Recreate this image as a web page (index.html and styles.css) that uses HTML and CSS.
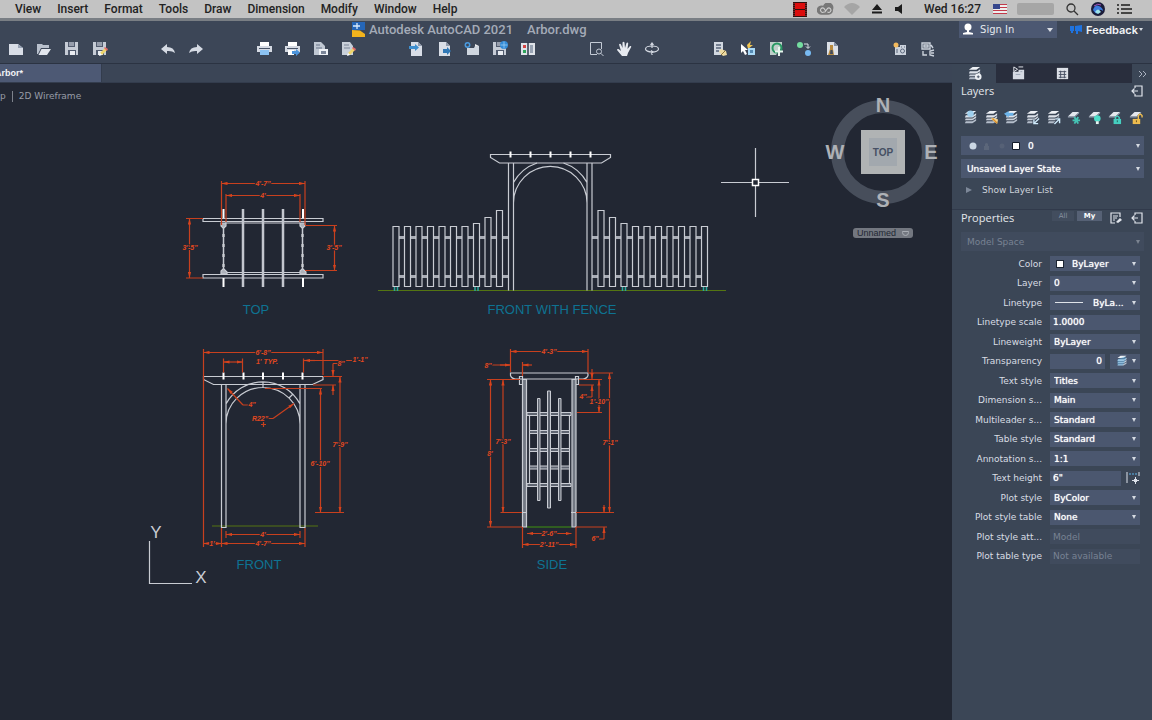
FILE: index.html
```html
<!DOCTYPE html>
<html lang="en">
<head>
<meta charset="utf-8">
<title>Autodesk AutoCAD 2021 - Arbor.dwg</title>
<link rel="stylesheet" href="styles.css">
</head>
<body>
<svg class="defs" aria-hidden="true">
  <defs>
    <marker id="arr" viewBox="0 0 6 4" refX="6" refY="2" markerWidth="6" markerHeight="4" markerUnits="userSpaceOnUse" orient="auto-start-reverse"><path d="M0 0.4L6 2L0 3.6z" fill="#d8431c"/></marker>
    <symbol id="stack" viewBox="0 0 16 16"><path d="M6 1h8l-4 3H2z" fill="#eef1f5"/><path d="M3 5.500h8l3-2v2l-4 2.500H2z" fill="#dde2ea"/><path d="M3 9h7l4-2.500v2L10 11H2z" fill="#c9d0da"/><path d="M3 12h7l4-2.500v2L10 14H2z" fill="#b4bdca"/></symbol>
    <symbol id="sheet" viewBox="0 0 16 16"><path d="M7 2h7l-5 5H2z" fill="#e4e8ee"/><path d="M2 7h7l5-5v1.500L9 8H2z" fill="#9aa5b5"/></symbol>
    <symbol id="page" viewBox="0 0 16 16"><path d="M3 1h7l4 4v10H3z" fill="#d9dee7"/><path d="M10 1v4h4z" fill="#8f9aac"/></symbol>
    <symbol id="floppy" viewBox="0 0 16 16"><path d="M1 1h13v13H1z" fill="#c6ccd6"/><path d="M4 1h7v5H4z" fill="#515b6e"/><path d="M5 2h5M5 4h5" stroke="#dde2ea"/><path d="M4 9h8v5H4z" fill="#515b6e"/><path d="M6 10h5v4H6z" fill="#e9ecf1"/></symbol>
    <symbol id="pencil" viewBox="0 0 16 16"><path d="M8 12l5-5 2 2-5 5z" fill="#efd56a"/><path d="M12 7l1-1 3 2-1 2z" fill="#e46a6a"/><path d="M7 15l1-3 2 2z" fill="#fff"/></symbol>
    <symbol id="printer" viewBox="0 0 16 16"><path d="M4 1h9v4H4z" fill="#fff"/><path d="M1 5h15v6H1z" fill="#d5dae3"/><path d="M3 7.500h11" stroke="#4a5569"/></symbol>
    <symbol id="exit" viewBox="0 0 12 12"><path d="M4 3V1h7v10H4V9M1 6h6M3.500 3.500L1 6l2.500 2.500" fill="none" stroke="#e1e5ec" stroke-width="1.200"/></symbol>
  </defs>
</svg>

<nav class="menubar" aria-label="Menu bar">
  <div class="menus">
    <button class="menu">View</button><button class="menu">Insert</button><button class="menu">Format</button><button class="menu">Tools</button><button class="menu">Draw</button><button class="menu">Dimension</button><button class="menu">Modify</button><button class="menu">Window</button><button class="menu">Help</button>
  </div>
  <div class="status">
    <svg width="14" height="15" viewBox="0 0 14 15"><path d="M0 0h14v15H0z" fill="#301010"/><path d="M2 1h10v6H2zM2 8h10v6H2z" fill="#dc0d0d"/><path d="M1 1v14M13 1v14" stroke="#a44" stroke-dasharray="1 1"/></svg>
    <svg width="17" height="13" viewBox="0 0 18 13" fill="none"><path d="M6 12a5 5 0 1 1 .5-9.500A5.500 5.500 0 0 1 17 6.500 5.500 5.500 0 0 1 12 12z" fill="#777"/><path d="M9.500 8.500L7.500 5.500a2.300 2.300 0 1 0 0 3.500M8 9.500l3-4a2.300 2.300 0 1 1 0 3.500" stroke="#cdcdcd" stroke-width="1.200"/></svg>
    <svg width="16" height="12" viewBox="0 0 16 12" fill="#a5a5a5"><path d="M8 12L0 4Q8-4 16 4z"/></svg>
    <svg width="10" height="10" viewBox="0 0 10 10" fill="#1c1c1c"><path d="M5 0l5 6H0zM0 7.500h10V9.500H0z"/></svg>
    <svg width="10" height="10" viewBox="0 0 10 10" fill="#1c1c1c"><path d="M1 3h3l4-3v10L4 7H1z"/></svg>
    <span class="clock">Wed 16:27</span>
    <svg width="14" height="10" viewBox="0 0 14 10"><path d="M0 0h14v10H0z" fill="#eee"/><path d="M0 .5h14M0 3.500h14M0 6.500h14M0 9.500h14" stroke="#c23a4a" stroke-width="1.200"/><path d="M0 0h7v5H0z" fill="#35468c"/></svg>
    <span class="user"></span>
    <svg width="13" height="13" viewBox="0 0 13 13" fill="none" stroke="#333" stroke-width="1.300"><circle cx="5" cy="5" r="4"/><path d="M8 8l4 4"/></svg>
    <svg width="14" height="14" viewBox="0 0 14 14"><circle cx="7" cy="7" r="7" fill="#1b1c3a"/><path d="M2 8q2-6 6-4t4 5q-4-3-5 1T2 8z" fill="#3c7bdc"/><path d="M4 10q3-5 6 0l-3 2z" fill="#9fe3ea"/><path d="M3 4q4-3 7-1" stroke="#a857c4" fill="none"/></svg>
    <svg width="15" height="10" viewBox="0 0 15 10" stroke="#1c1c1c" stroke-width="1.500"><path d="M0 1h2M4 1h9M0 5h2M4 5h11M0 9h2M4 9h11"/></svg>
  </div>
</nav>

<header class="header">
  <div class="titlebar">
    <h1 class="title"><svg width="13" height="15" viewBox="0 0 13 15"><path d="M0 0h13v8H0z" fill="#2566b8"/><path d="M1 4h7M5 1v6" stroke="#d9ecff" stroke-width="1.300"/><path d="M0 8l8 .5 5 3.500v3H0z" fill="#f2b31d"/></svg><span>Autodesk AutoCAD 2021</span><span>Arbor.dwg</span></h1>
    <div class="account">
      <button class="signin"><svg width="12" height="13" viewBox="0 0 12 13" fill="#fff"><circle cx="6" cy="4" r="3.500"/><path d="M5 7h2v2l4 1v1.500H1V10l4-1z"/></svg><span>Sign In</span><i class="caret"></i></button>
      <button class="feedback"><svg width="12" height="11" viewBox="0 0 12 11" fill="#1f73e0"><path d="M0 2h4v5H3v2H1V7H0zM5 2l7-1v7l-4-1v3H6V7H5z"/></svg><span>Feedback</span><i class="caret small"></i></button>
    </div>
  </div>
  <div class="toolbar">
    <div class="group">
      <button class="tool" aria-label="New"><svg viewBox="0 0 16 16"><path d="M1 3h9l5 4v7H1z" fill="#d9dee7"/><path d="M10 3v4h5z" fill="#98a3b5"/></svg></button>
      <button class="tool" aria-label="Open"><svg viewBox="0 0 16 16"><path d="M1 3h5l1 1h6v3H5l-3 6H1z" fill="#b9c1cd"/><path d="M5.500 8H15l-4 6H2.500z" fill="#e3e7ee"/></svg></button>
      <button class="tool" aria-label="Save"><svg viewBox="0 0 16 16"><use href="#floppy"/></svg></button>
      <button class="tool" aria-label="Save As"><svg viewBox="0 0 16 16"><use href="#floppy"/><use href="#pencil"/></svg></button>
    </div>
    <div class="group">
      <button class="tool" aria-label="Undo"><svg viewBox="0 0 16 16"><path d="M1 8l6-5v3q7 0 8 6-3-2.500-8-2v3z" fill="#d5dae3"/></svg></button>
      <button class="tool" aria-label="Redo"><svg viewBox="0 0 16 16"><path d="M15 8L9 3v3q-7 0-8 6 3-2.500 8-2v3z" fill="#d5dae3"/></svg></button>
    </div>
    <div class="group">
      <button class="tool" aria-label="Print"><svg viewBox="0 0 16 16"><use href="#printer"/><path d="M4 9h9v5H4z" fill="#8cc3f3"/></svg></button>
      <button class="tool" aria-label="Batch print"><svg viewBox="0 0 16 16"><use href="#printer"/><path d="M4 9h6v5H4z" fill="#fff"/><path d="M8 10h4V8l4 3.500-4 3.500v-2H8z" fill="#4b94dc"/></svg></button>
      <button class="tool" aria-label="Page setup"><svg viewBox="0 0 16 16"><path d="M2 1h7l4 4v9H2z" fill="#c0c8d3"/><path d="M4 4h4M4 7h6" stroke="#687489"/><path d="M7 8h9v6H7z" fill="#eef1f5"/><path d="M9 10h5v3H9z" fill="#7a8598"/></svg></button>
      <button class="tool" aria-label="Edit sheet"><svg viewBox="0 0 16 16"><path d="M2 1h8l3 4v9H2z" fill="#c9d0da"/><path d="M4 4h5M4 7h6" stroke="#7a8598"/><use href="#pencil"/></svg></button>
    </div>
    <div class="group">
      <button class="tool" aria-label="Import"><svg viewBox="0 0 16 16"><use href="#page"/><path d="M1 5h6V3l4 3.500L7 10V8H1z" fill="#3f8fce"/></svg></button>
      <button class="tool" aria-label="Export"><svg viewBox="0 0 16 16"><use href="#page"/><path d="M7 8h4V6l4 4-4 4v-2H7z" fill="#3178b5"/></svg></button>
      <button class="tool" aria-label="Attach"><svg viewBox="0 0 16 16"><path d="M3 7h7l1-2h4v9H3z" fill="#cfd6df"/><path d="M11 3l4 2h-4z" fill="#eee"/><circle cx="3.500" cy="4" r="2.200" fill="none" stroke="#4a9be0" stroke-width="1.500"/></svg></button>
      <button class="tool" aria-label="Save to web"><svg viewBox="0 0 16 16"><use href="#floppy"/><circle cx="12" cy="4" r="4" fill="#348bd7"/><path d="M8.500 4h7M12 .5v7" stroke="#a6d5f5" stroke-width=".7"/></svg></button>
      <button class="tool" aria-label="Compare"><svg viewBox="0 0 16 16"><path d="M1 2h14v12H1z" fill="#dfe3e9"/><path d="M3 4h3v3H3z" fill="#d34545"/><path d="M3 9h3v3H3z" fill="#2ea45c"/><path d="M8 1v14" stroke="#303a4b" stroke-width="1.500"/><path d="M10 4h3v8h-3z" fill="#98a3b3"/></svg></button>
    </div>
    <div class="group">
      <button class="tool" aria-label="Zoom window"><svg viewBox="0 0 16 16" fill="none" stroke="#c4cbd6"><path d="M9 13.500H2.500v-12h11V8"/><circle cx="11" cy="10.500" r="2.500"/><path d="M12.800 12.300L15.500 15"/></svg></button>
      <button class="tool" aria-label="Pan"><svg viewBox="0 0 16 16"><path d="M6 15L1 9q0-1.500 1.500-1L5 10 3 3.500q1-1.500 2 0L6.500 7 6.500 1.500q1-1.500 2 0L9 7l1.500-5q1.500-1 1.700.5L11.500 8 14 5q1.500-.5 1.200 1L12 12l-1 3z" fill="#e7eaf0"/></svg></button>
      <button class="tool" aria-label="Orbit"><svg viewBox="0 0 16 16" fill="none" stroke="#d5dae3" stroke-width="1.200"><ellipse cx="8" cy="8" rx="6.500" ry="3"/><path d="M8 2v5M8 10v4M6.500 4L8 2l1.500 2M7 9.500l2 1.500-2 1.500"/></svg></button>
    </div>
    <div class="group">
      <button class="tool" aria-label="Properties"><svg viewBox="0 0 16 16"><path d="M2 1h9v13H2z" fill="#d2d8e1"/><path d="M4 4h5M4 7h5M4 10h3" stroke="#58647a" stroke-width="1.500"/><path d="M9 8l5 2 1 4-4 1-4-4z" fill="#eedba2"/><path d="M9 14l4-4" stroke="#8f763b"/></svg></button>
      <button class="tool" aria-label="Quick select"><svg viewBox="0 0 16 16"><path d="M7 4l4-4-1 4h3L8 8z" fill="#f1c550"/><path d="M1 3l7 6H5l2 4-2 1-2-4-2 2z" fill="#fff"/><path d="M8 7h7v7H8z" fill="#a8d8f6"/><path d="M10 9h3v3h-3z" fill="#568bb4"/></svg></button>
      <button class="tool" aria-label="Purge"><svg viewBox="0 0 16 16"><path d="M2 1h12v5l-6 8H2z" fill="#bfcfca"/><circle cx="9" cy="7" r="4.500" fill="none" stroke="#279863" stroke-width="2"/><path d="M11 6v9M7 10.500h8" stroke="#e8f5ee" stroke-width="2"/></svg></button>
      <button class="tool" aria-label="Match"><svg viewBox="0 0 16 16"><circle cx="4" cy="4" r="3" fill="#74dda0"/><circle cx="12" cy="12" r="3" fill="#78baf2"/><path d="M8 3h4v4M10 5.500l2 2 2-2" fill="none" stroke="#dce1e8"/></svg></button>
      <button class="tool" aria-label="Drafting tools"><svg viewBox="0 0 16 16"><path d="M3 1h7l4 4v9H3z" fill="#dce0e7"/><path d="M10 1v4h4z" fill="#8390a4"/><path d="M6 4h3v4l1 6H4l2-6z" fill="#b88a3f"/><path d="M6.500 9h2l.5 4H6z" fill="#414b5b"/></svg></button>
    </div>
    <div class="group">
      <button class="tool" aria-label="Insert block"><svg viewBox="0 0 16 16"><path d="M3 6h5V4h6v10H3z" fill="#cbd2dc"/><circle cx="4" cy="4" r="2.500" fill="#f3b95c"/><path d="M9 6h1M12 6h1M5 8v4" stroke="#5c687c"/><circle cx="10.500" cy="10" r="2" fill="none" stroke="#5c687c"/></svg></button>
      <button class="tool" aria-label="Replace block"><svg viewBox="0 0 16 16" fill="none" stroke="#cbd2dc" stroke-width="1.400"><path d="M2 2h8v6H2zM4 4h4v2H4zM11 4l2 3M3 10v4h4M14 9l-4 1v4l4 1M11 12h3"/></svg></button>
    </div>
  </div>
</header>

<div class="workspace">
  <main class="document">
    <div class="filetabs"><button class="filetab"><span>Arbor*</span></button></div>
    <section class="canvas">
      <div class="viewctl"><button>p</button><i></i><button>2D Wireframe</button></div>
      <svg class="drawing" viewBox="0 83 952 637" preserveAspectRatio="xMinYMin meet" role="img" aria-label="Arbor drawing">
        <!-- Top view -->
        <g class="ln">
          <path d="M203 218.500h120v3H203zM203 274.500h120v3.500H203zM225 223h75M225 272.500h75"/>
          <path class="mid" d="M243 209v78M263 209v78M283 209v78"/>
          <path class="bold" d="M223.500 209v9M303 209v9M223.500 278v9M303 278v9"/>
          <path class="bold" d="M223.500 224v49M302.500 224v49" stroke-dasharray="3 7"/>
          <path d="M223.500 224v49M302.500 224v49" stroke-width="1.500"/>
          <path class="corner" d="M221 223h5v3l-2 2h-1l-2-2zM300 223h5v3l-2 2h-1l-2-2zM221 274v-3l2-2h1l3 3v2zM300 274v-3l2-2h1l3 3v2z"/>
        </g>
        <g class="dim">
          <path d="M221.500 181v44M305 181v44M226 194v28M300 194v28M186 218.500h17M186 278h17M305 225.500h32M305 270.500h32"/>
          <g class="arrows"><path d="M221.500 183.500H305"/><path d="M226 195.500H300"/><path d="M189.500 218.500V278"/><path d="M334.500 225.500V270.500"/></g>
          <text x="263" y="186">4'-7"</text><text x="263" y="198">4'</text><text x="190" y="250">3'-5"</text><text x="334" y="250">3'-5"</text>
        </g>

        <!-- Front with fence -->
        <path class="ground" d="M378 290.500H726"/>
        <g class="ln">
          <path class="rail" d="M399 237.500H508M399 276.500H508M592 237.500H702M592 276.500H702"/>
          <path class="solid" d="M393 286.500V226.500h6v60zM404.500 286.500V226.500h6v60zM416 286.500V226.500h6v60zM427.500 286.500V226.500h6v60zM439 286.500V226.500h6v60zM450.500 286.500V226.500h6v60zM462 286.500V226.500h6v60zM473.500 286.500V223.500h6v63zM485 286.500V217.500h6v69zM496.500 286.500V210.500h6v76z"/>
          <path class="solid" d="M598 286.500V210.500h6v76zM609.500 286.500V217.500h6v69zM621 286.500V223.500h6v63zM632.500 286.500V226.500h6v60zM644 286.500V226.500h6v60zM655.500 286.500V226.500h6v60zM667 286.500V226.500h6v60zM678.500 286.500V226.500h6v60zM690 286.500V226.500h6v60zM701.500 286.500V226.500h6v60z"/>
          <path d="M490.500 154.500H610.500v3L601.500 163H499.500L490.500 157.500z"/>
          <path class="bold" d="M510.500 151.500v6M530.500 151.500v6M550.500 151.500v6M570.500 151.500v6M590.500 151.500v6"/>
          <path d="M508.500 163V290.500M513.500 163V290.500M587 163V290.500M592 163V290.500M513.500 203A36.700 36.500 0 0 1 587 203M513.500 182.500A42 42 0 0 1 537 163M563.500 163A42 42 0 0 1 587 182.500"/>
        </g>
        <path class="foot" d="M394.500 287v4M397.500 287v4M475 287v4M478 287v4M622.500 287v4M625.500 287v4M703.500 287v4M706.500 287v4"/>

        <!-- Front view -->
        <path class="ground" d="M212 526H318"/>
        <g class="ln">
          <path d="M203.500 376.500H323v3L312.500 384.500H213.500L203.500 379.500z"/>
          <path class="bold" d="M223.500 372.500v7M243.500 372.500v7M263 372.500v7M283 372.500v7M302.500 372.500v7"/>
          <path d="M221.500 384.500V527.500H226V384.500M300 384.500V527.500H305V384.500M226 424A37 36.500 0 0 1 300 424M226 404A42 42 0 0 1 300 404M263 382v6M289 398l4-4"/>
        </g>
        <g class="dim">
          <path d="M203.500 349V547M323 349V375M223.500 358.500v14M242.500 358.500v14M303.500 358.500v14M323 376.500H342M313 385H336M265 388.500H322M315 512.500H344M221.500 528V547M305 528V547M226 531v7M300 531v7"/>
          <path d="M303.500 360.500H352M333 363.500h5M243 405h6M273 418.500h-7M261 424.500h5M263.500 422v5"/>
          <g class="arrows"><path d="M203.500 352.500H323"/><path d="M223.500 362H242.500"/><path d="M340 376.500V512.500"/><path d="M320.500 388.500V512.500"/><path d="M226 534.500H300"/><path d="M221.500 543.500H305"/><path d="M203.500 543.500H221.500"/></g>
          <path class="to" d="M333 363.500V376"/><path class="to" d="M333 395V385"/><path class="to" d="M243 405L227.500 388.500"/><path class="to" d="M273 418.500L294 403.500"/><path class="to" d="M315 360.500H304"/>
          <text x="263" y="355">6'-8"</text><text x="267" y="364">1' TYP.</text><text x="360" y="362">1'-1"</text><text x="341" y="366">8"</text><text x="252" y="407">4"</text><text x="260" y="421">R22"</text><text x="340" y="447">7'-9"</text><text x="320" y="466">6'-10"</text><text x="263" y="537">4'</text><text x="263" y="546">4'-7"</text><text x="212" y="546">1'</text>
        </g>

        <!-- Side view -->
        <path class="ground bright" d="M527 527H571"/>
        <g class="ln">
          <path d="M510.500 373H588v2.500q-1 3-5 3.500H515.500q-4-.5-5-3.500zM519.500 376.500h3v8h-3zM575.500 376.500h3v8h-3z"/>
          <path class="postfill" d="M522.500 379.500V527h4V379.500zM572 379.500V527h4V379.500z"/>
          <path d="M522 512.500h5M571 512.500h5M529.500 412.500v74M569.500 412.500v74"/>
          <path class="slat" d="M527 412.500h44v3H527zM529.500 430.500h40v3h-40zM529.500 448.500h40v3h-40zM529.500 466h40v3h-40zM527 483.500h44v3H527z"/>
          <path class="slat" d="M537.500 398.500h2.500v102h-2.500zM547.500 391h3v117h-3zM558.500 398.500h2.500v102h-2.500z"/>
        </g>
        <g class="dim">
          <path d="M510.500 349V372M588 349V372M522.500 362V376M487 379.500H520M487 527H522M500.500 512.500H522M588 373H613M579 379.500H602M579 385H594M577 412.500H602M576 512.500H614M576 527H607M522.500 527V548M576 527V548M492 365H511M604 539h-5M586 397h6"/>
          <g class="arrows"><path d="M510.500 351.500H588"/><path d="M490.500 379.500V527"/><path d="M503 379.500V512.500"/><path d="M609.500 373V512.500"/><path d="M599 379.500V412.500"/><path d="M527 533.500H571.500"/><path d="M522.500 544.500H576"/></g>
          <path class="to" d="M500 365H510.500"/><path class="to" d="M532 365H522.500"/><path class="to" d="M592 369V379"/><path class="to" d="M592 397V385"/><path class="to" d="M604 539V527"/><path class="to" d="M604 505V512.500"/>
          <text x="549" y="354">4'-3"</text><text x="488" y="368">8"</text><text x="490" y="456">8'</text><text x="503" y="444">7'-3"</text><text x="610" y="445">7'-1"</text><text x="599" y="404">1'-10"</text><text x="583" y="399">4"</text><text x="595" y="541">6"</text><text x="549" y="536">2'-6"</text><text x="549" y="547">2'-11"</text>
        </g>

        <g class="caption"><text x="256" y="314">TOP</text><text x="552" y="314">FRONT WITH FENCE</text><text x="259" y="569">FRONT</text><text x="552" y="569">SIDE</text></g>

        <!-- Axes and crosshair -->
        <path class="axis" d="M149.500 541V583.500H192"/>
        <g class="axisname"><text x="156" y="538">Y</text><text x="201" y="583">X</text></g>
        <path class="axis" d="M755.500 148V179.500M755.500 185.500V217M721 182.500H752.500M758.500 182.500H789"/><path class="cross" d="M752.500 179.500h6v6h-6z"/>
      </svg>
      <div class="navcube">
        <svg viewBox="0 0 116 116" width="116" height="116" role="img" aria-label="View cube">
          <circle cx="58" cy="58" r="45.500" fill="none" stroke="#474e5b" stroke-width="13"/>
          <path d="M36 36h44v44H36z" fill="#b0b3b4"/><path d="M44 44h28v28H44z" fill="#a2a8ae"/>
          <text class="face" x="58" y="62">TOP</text>
          <g class="compass"><text x="58" y="18">N</text><text x="10" y="65">W</text><text x="106" y="65">E</text><text x="58" y="113">S</text></g>
        </svg>
        <button class="ucs"><span>Unnamed</span><i></i></button>
      </div>
    </section>
  </main>

  <aside class="panel">
    <div class="paneltabs">
      <button class="ptab active" aria-label="Layers"><svg viewBox="0 0 16 16"><use href="#stack"/><circle cx="12" cy="11.500" r="3.500" fill="#eef1f5"/><path d="M12 10v3M10.500 11.500h3" stroke="#4a5569"/></svg></button>
      <button class="ptab" aria-label="Blocks"><svg viewBox="0 0 16 16"><path d="M2 6h6V4h6v10H2z" fill="#d5dae3"/><path d="M3 1l4 2.500L3 6zM8 1h5" fill="none" stroke="#e9ecf1"/><path d="M10 6h2M5 9h5" stroke="#9aa4b4"/></svg></button>
      <button class="ptab" aria-label="Sheets"><svg viewBox="0 0 16 16"><path d="M2 2h12v12H2z" fill="#dce0e7"/><path d="M4 6h8M4 9h8M4 12h8M6 5v8M10 5v8" stroke="#464f62"/></svg></button>
      <button class="more" aria-label="More"><svg width="9" height="8" viewBox="0 0 9 8" fill="none" stroke="#aab2c0"><path d="M1 1l3 3-3 3M5 1l3 3-3 3"/></svg></button>
    </div>
    <section class="layers">
      <div class="head"><h2>Layers</h2><button class="ico" aria-label="Undock"><svg viewBox="0 0 12 12"><use href="#exit"/></svg></button></div>
      <div class="layertools">
        <button aria-label="Make current"><svg viewBox="0 0 16 16"><use href="#stack"/><circle cx="8" cy="4" r="3.500" fill="#9fd0ee"/></svg></button>
        <button aria-label="Match layer"><svg viewBox="0 0 16 16"><use href="#stack"/><path d="M8 8l7 2-1 5-6-5z" fill="#f4d28c"/><path d="M9 9l5 5" stroke="#d98d27" stroke-width="1.500"/></svg></button>
        <button aria-label="Previous layer"><svg viewBox="0 0 16 16"><use href="#stack"/><path d="M0 4l5-3v2h5v3H5v2z" fill="#6cb4ea"/></svg></button>
        <button aria-label="Isolate"><svg viewBox="0 0 16 16"><use href="#stack"/><path d="M15 9l-5 5M9.500 10v4.500H14" fill="none" stroke="#3b4656" stroke-width="3"/><path d="M15 9l-5 5M9.500 10v4.500H14" fill="none" stroke="#cfe9fa" stroke-width="1.500"/></svg></button>
        <button aria-label="Unisolate"><svg viewBox="0 0 16 16"><use href="#stack"/><path d="M9 15l5-5M10 9.500h4.500V14" fill="none" stroke="#3b4656" stroke-width="3"/><path d="M9 15l5-5M10 9.500h4.500V14" fill="none" stroke="#cfe9fa" stroke-width="1.500"/></svg></button>
        <button aria-label="Freeze"><svg viewBox="0 0 16 16"><use href="#sheet"/><path d="M7 11h8M9 7.500l4 7M13 7.500l-4 7" stroke="#45c3b4" stroke-width="2"/></svg></button>
        <button aria-label="Off"><svg viewBox="0 0 16 16"><use href="#sheet"/><circle cx="11" cy="9" r="3.500" fill="#4cdcc8"/><path d="M9.500 12h3v3h-3z" fill="#e6f5f2"/></svg></button>
        <button aria-label="Lock"><svg viewBox="0 0 16 16"><use href="#sheet"/><path d="M9 10V8q2-3 4 0v2" fill="none" stroke="#45cfc0" stroke-width="1.500"/><path d="M7 9.500h8V15H7z" fill="#45cfc0"/><path d="M11 11v2" stroke="#245c58"/></svg></button>
        <button aria-label="Unlock"><svg viewBox="0 0 16 16"><use href="#sheet"/><path d="M11 10V6q2-3 4 0v2" fill="none" stroke="#eebc4e" stroke-width="1.500"/><path d="M5 9.500h8V15H5z" fill="#eebc4e"/><path d="M9 11v2" stroke="#6a5120"/></svg></button>
      </div>
      <div class="field wide layerpick"><svg width="56" height="12" viewBox="0 0 56 12"><circle cx="7" cy="6" r="3.500" fill="#cbd7e4"/><path d="M18 6h5v4h-5zM19 6V4q1.500-2 3 0v2" fill="#5b667a"/><circle cx="36" cy="6" r="2.500" fill="#566176"/><path d="M46.500 2.500h7v7h-7z" fill="#fff" stroke="#111a28"/></svg><select aria-label="Current layer"><option>0</option></select></div>
      <div class="field wide"><select aria-label="Layer state"><option>Unsaved Layer State</option></select></div>
      <button class="showlist"><i></i><span>Show Layer List</span></button>
    </section>
    <section class="props">
      <div class="head"><h2>Properties</h2><div class="seg"><button>All</button><button class="on">My</button></div>
        <button class="ico" aria-label="Customize"><svg viewBox="0 0 12 12" fill="none" stroke="#e1e5ec" stroke-width="1.200"><path d="M5 11H1V1h9v4M3 4h5M3 6h4M3 8h2"/><path d="M6 10l4-4 2 2-4 3z" fill="#e1e5ec" stroke="none"/></svg></button>
        <button class="ico" aria-label="Undock"><svg viewBox="0 0 12 12"><use href="#exit"/></svg></button></div>
      <div class="field wide off"><select aria-label="Selection" disabled><option>Model Space</option></select></div>
      <div class="rows">
        <div class="row"><label for="p1">Color</label><div class="field color"><i class="swatch"></i><select id="p1"><option>ByLayer</option></select></div></div>
        <div class="row"><label for="p2">Layer</label><div class="field"><select id="p2"><option>0</option></select></div></div>
        <div class="row"><label for="p3">Linetype</label><div class="field ltype"><i class="line"></i><select id="p3"><option>ByLa...</option></select></div></div>
        <div class="row"><label for="p4">Linetype scale</label><div class="field text"><input id="p4" value="1.0000"></div></div>
        <div class="row"><label for="p5">Lineweight</label><div class="field"><select id="p5"><option>ByLayer</option></select></div></div>
        <div class="row"><label for="p6">Transparency</label><div class="pair"><div class="field text num"><input id="p6" value="0"></div><button class="field mini" aria-label="Transparency source"><svg width="14" height="12" viewBox="0 0 16 16"><use href="#stack"/><path d="M2 6l9-4 3 2-5 10H2z" fill="#5aa9dc" opacity=".5"/></svg></button></div></div>
        <div class="row"><label for="p7">Text style</label><div class="field"><select id="p7"><option>Titles</option></select></div></div>
        <div class="row"><label for="p8">Dimension s...</label><div class="field"><select id="p8"><option>Main</option></select></div></div>
        <div class="row"><label for="p9">Multileader s...</label><div class="field"><select id="p9"><option>Standard</option></select></div></div>
        <div class="row"><label for="p10">Table style</label><div class="field"><select id="p10"><option>Standard</option></select></div></div>
        <div class="row"><label for="p11">Annotation s...</label><div class="field"><select id="p11"><option>1:1</option></select></div></div>
        <div class="row"><label for="p12">Text height</label><div class="pair"><div class="field text"><input id="p12" value="6&quot;"></div><button class="pick" aria-label="Pick height"><svg width="14" height="14" viewBox="0 0 14 14"><path d="M1 1v11M13 1v4" stroke="#dde2ea"/><path d="M3 3h8" stroke="#5fb4ea" stroke-dasharray="2 1"/><path d="M9.500 6v7M6 9.500h7" stroke="#dde2ea"/><path d="M8 8h3v3H8z" fill="#dde2ea"/></svg></button></div></div>
        <div class="row"><label for="p13">Plot style</label><div class="field"><select id="p13"><option>ByColor</option></select></div></div>
        <div class="row"><label for="p14">Plot style table</label><div class="field"><select id="p14"><option>None</option></select></div></div>
        <div class="row"><label for="p15">Plot style att...</label><div class="field text off"><input id="p15" value="Model" disabled></div></div>
        <div class="row"><label for="p16">Plot table type</label><div class="field text off"><input id="p16" value="Not available" disabled></div></div>
      </div>
    </section>
  </aside>
</div>
</body>
</html>
```
FILE: styles.css
```css
* { box-sizing: border-box; }
body {
  margin: 0;
  min-height: 100vh;
  display: flex;
  flex-direction: column;
  background: #222733;
  color: #d9dde4;
  font: 9px/14px "DejaVu Sans", sans-serif;
  overflow: hidden;
}
button, input, select {
  margin: 0;
  padding: 0;
  border: 0;
  border-radius: 0;
  background: none;
  color: inherit;
  font: inherit;
  appearance: none;
}
button { display: flex; align-items: center; white-space: nowrap; }
h1, h2 { margin: 0; font: inherit; }
svg { display: block; flex: none; }
.defs { position: absolute; width: 0; height: 0; }

.menubar {
  display: flex;
  justify-content: space-between;
  align-items: center;
  height: 21px;
  padding: 0 20px 0 15px;
  background: #c3c3c3;
  border-bottom: 3px solid #797e84;
  color: #222;
  font: 500 12px/18px Roboto, sans-serif;
}
.menus { display: flex; gap: 16px; }
.status { display: flex; align-items: center; gap: 12px; }
.status svg:nth-of-type(-n+2) { margin-right: -2px; }
.clock { margin-left: 8px; white-space: nowrap; }
.user { width: 37px; height: 12px; margin-left: -2px; background: #a6a6a6; border-radius: 2px; }

.header { background: #3c4657; border-bottom: 1px solid #2b3342; }
.titlebar {
  display: flex;
  justify-content: space-between;
  height: 17px;
  padding: 0 9px 0 352px;
}
.title {
  display: flex;
  align-items: center;
  gap: 4px;
  color: #a4abb7;
  font: 500 13px/17px Roboto, sans-serif;
  white-space: nowrap;
}
.title span + span { margin-left: 10px; }
.account { display: flex; gap: 13px; }
.signin {
  width: 98px;
  padding: 0 4px 0 3px;
  gap: 6px;
  background: #4c5872;
  color: #e5e8ed;
  font: 10px/16px "DejaVu Sans", sans-serif;
}
.caret {
  margin-left: auto;
  border: 3px solid transparent;
  border-top: 4px solid #d9dde4;
  border-bottom: 0;
}
.caret.small { margin: 0; border-width: 3px 2px 0; }
.feedback { gap: 4px; color: #f0f2f5; font: 600 11px/16px Inter, sans-serif; }
.feedback .caret { margin-left: -3px; }
.toolbar { display: flex; align-items: center; gap: 52px; height: 25px; padding: 0 8px 4px; }
.group { display: flex; gap: 12px; }
.tool, .tool svg { width: 16px; height: 16px; }

.workspace { flex: 1; display: flex; min-height: 0; }
.document { flex: 1; min-width: 0; display: flex; flex-direction: column; }
.filetabs { display: flex; height: 19px; background: #3b4556; border-bottom: 1px solid #333c4d; }
.filetab {
  width: 102px;
  background: #4d5974;
  border-right: 1px solid #333c4d;
  color: #f2f4f7;
  font: 700 9px/18px "Liberation Sans", sans-serif;
}
.filetab span { margin-left: -5px; }
.canvas { position: relative; flex: 1; min-height: 0; overflow: hidden; background: #222733; }
.viewctl {
  position: absolute;
  top: 6px;
  left: 0;
  display: flex;
  align-items: center;
  gap: 6px;
  color: #989da7;
}
.viewctl i { height: 11px; border-left: 1px solid #7d828c; }
.drawing { width: 100%; height: 100%; }
.ln { fill: none; stroke: #c9ccd3; stroke-width: 1.2; }
.ln .bold { stroke: #fff; stroke-width: 2; }
.ln .mid { stroke: #c3c6ce; stroke-width: 2.5; }
.ln .rail { stroke: #a9adb6; stroke-width: 3; }
.ln .solid { fill: #222733; }
.ln .corner { fill: #aeb2ba; }
.ln .slat { fill: #5f6571; stroke-width: 1; }
.ln .postfill { fill: #737984; }
.ground { fill: none; stroke: #547512; stroke-width: 1.2; }
.ground.bright { stroke: #3f9410; }
.foot { fill: none; stroke: #28a79c; stroke-width: 1.5; }
.dim { fill: none; stroke: #c8401e; stroke-width: 1.2; }
.dim .arrows path { marker-start: url(#arr); marker-end: url(#arr); }
.dim .to { marker-end: url(#arr); }
.dim text {
  fill: #e2481f;
  stroke: #222733;
  stroke-width: 2;
  paint-order: stroke;
  font: italic 700 7px "Liberation Sans", sans-serif;
  text-anchor: middle;
}
.caption { fill: #0e7392; font: 13px "Liberation Sans", sans-serif; text-anchor: middle; }
.axis { fill: none; stroke: #c9ccd3; stroke-width: 1.2; }
.cross { fill: none; stroke: #fff; stroke-width: 1.5; }
.axisname { fill: #c9ccd3; font: 17px "Liberation Sans", sans-serif; text-anchor: middle; }
.navcube {
  position: absolute;
  top: 11px;
  right: 11px;
  display: flex;
  flex-direction: column;
  align-items: center;
  gap: 18px;
}
.face { fill: #465064; font: 700 10px "Liberation Sans", sans-serif; text-anchor: middle; }
.compass { fill: #aeb1b6; font: 700 20px "Liberation Sans", sans-serif; text-anchor: middle; }
.ucs {
  gap: 6px;
  height: 10px;
  padding: 0 4px;
  border-radius: 3px;
  background: #737780;
  color: #222733;
  font: 9px/10px "Liberation Sans", sans-serif;
}
.ucs i { width: 7px; height: 5px; border: 1px solid #a9adb4; border-radius: 0 0 4px 4px; }

.panel { width: 200px; background: #3b4656; }
.paneltabs { display: flex; height: 19px; background: #292e3d; }
.ptab { width: 44px; justify-content: center; }
.ptab svg { width: 15px; height: 15px; }
.ptab.active, .more { background: #3b4656; }
.more { width: 20px; margin-left: auto; justify-content: center; }
.layers { padding: 0 9px 12px; border-bottom: 1px solid #313a4b; }
.head { display: flex; align-items: center; height: 16px; }
.head h2 { flex: 1; color: #e3e6eb; font: 500 11px/16px "Open Sans", sans-serif; }
.ico { width: 12px; height: 12px; }
.ico svg { width: 12px; height: 12px; }
.layertools { display: flex; justify-content: space-between; padding: 11px 2px 11px; margin-right: -2px; }
.layertools svg { width: 15px; height: 15px; }

.field {
  position: relative;
  display: flex;
  align-items: center;
  flex: 1;
  height: 15px;
  background: #4b576f;
  color: #fff;
  text-shadow: 0 0 1px #fff;
}
.field select, .field input { flex: 1; width: 0; min-width: 0; height: 100%; padding: 0 12px 0 4px; opacity: 1; text-shadow: inherit; }
.field:not(.text)::after {
  content: "";
  position: absolute;
  right: 4px;
  top: 50%;
  margin-top: -2px;
  border: 2px solid transparent;
  border-top: 4px solid #d5dae2;
  border-bottom: 0;
  pointer-events: none;
}
.field.text input { padding: 0 3px; }
.field.wide { height: 19px; margin-right: -1px; }
.field.wide + .field.wide { margin-top: 4px; }
.field.wide select { padding-left: 6px; }
.field.off { background: #404b5d; color: #788293; text-shadow: none; }
.field.off::after { opacity: .4; }
.layerpick { padding-left: 5px; }
.layertools button { width: 15px; }
.showlist { gap: 10px; margin: 5px 0 0 5px; color: #cfd4dc; }
.showlist i { border: 3px solid transparent; border-left: 6px solid #7d8899; border-right: 0; }
.props { padding: 0 9px; }
.seg { display: flex; gap: 3px; margin: -4px 8px 0 0; font: 7px/10px "DejaVu Sans", sans-serif; }
.seg button { width: 22px; justify-content: center; background: #424d5e; color: #8792a2; }
.seg button.on { width: 25px; background: #566175; color: #fff; font-weight: 700; }
.props .ico + .ico { margin-left: 9px; }
.props > .wide { margin-top: 6px; }
.rows { display: flex; flex-direction: column; padding: 3px 3px 0 0; }
.row { display: flex; align-items: center; height: 19px; }
.row:nth-child(even) { height: 20px; }
.row label { width: 81px; margin-right: 8px; text-align: right; white-space: nowrap; }
.row .field { min-width: 0; }
.swatch { width: 8px; height: 8px; margin: 0 4px 0 6px; background: #fff; border: 1px solid #1c2432; }
.line { width: 28px; margin: 0 6px 0 5px; border-top: 1px solid #dfe3e9; }
.pair { display: flex; flex: 1; gap: 5px; min-width: 0; }
.num input { text-align: right; }
.field.mini { flex: none; width: 30px; padding-left: 5px; }
.pick { width: 14px; }
```
